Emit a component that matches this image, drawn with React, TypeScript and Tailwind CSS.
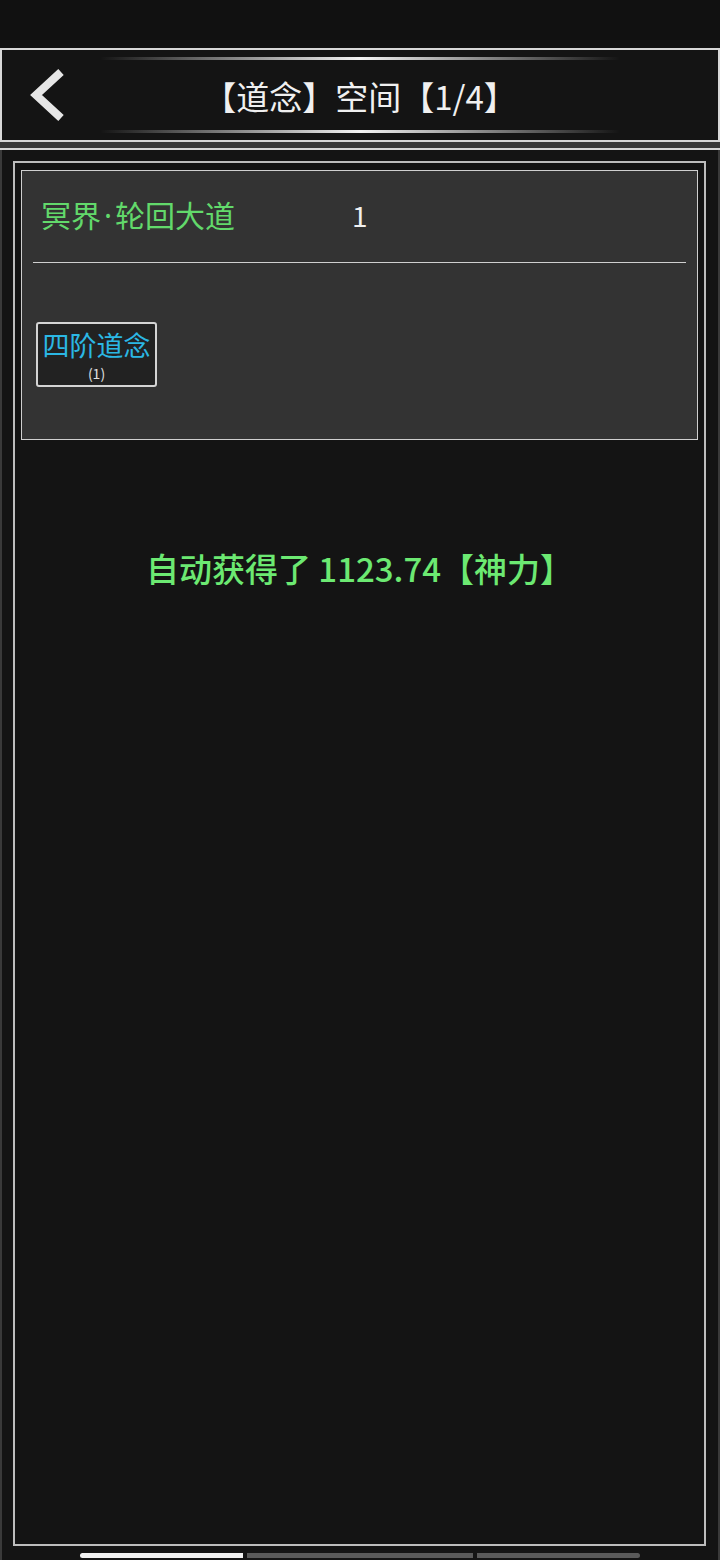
import React from 'react';

const FONT = { fontFamily: '"Noto Sans CJK SC", "Noto Sans", sans-serif' };
const LATIN = { fontFamily: '"Noto Sans", sans-serif' };

function GlowLine() {
  return (
    <div className="h-[3px] w-[520px] bg-gradient-to-r from-transparent via-[#f2f2f2] to-transparent" />
  );
}

function BackArrow() {
  return (
    <svg width="40" height="56" viewBox="0 0 40 56" fill="none">
      <polyline
        points="33,4 8,27 33,50"
        stroke="#e6e6e6"
        strokeWidth="8"
        strokeLinecap="butt"
        strokeLinejoin="miter"
      />
    </svg>
  );
}

export default function App() {
  return (
    <div className="w-[720px] h-[1560px] bg-[#111111] overflow-hidden flex flex-col" style={FONT}>
      {/* status bar space */}
      <div className="h-[48px] shrink-0" />

      {/* header */}
      <div className="shrink-0 flex border-2 border-[#d8d8d8] bg-[#141414]">
        <div className="w-[98px] flex items-center pl-[26px] pt-[2px]">
          <BackArrow />
        </div>
        <div className="w-[520px] flex flex-col items-center pt-[7px] pb-[7px]">
          <GlowLine />
          <div className="h-[70px] flex items-center pt-[2px] text-[33px] text-[#f0f0f0] leading-none">
            【道念】空间【1/4】
          </div>
          <GlowLine />
        </div>
        <div className="w-[98px]" />
      </div>
      <div className="h-[6px] shrink-0 bg-[#3a3a3a] border-b-2 border-[#d8d8d8] box-content" />

      {/* content */}
      <div className="flex-1 flex flex-col bg-[#141414] border-x-2 border-[#3a3a3a] pl-[11px] pr-[12px] pt-[11px] pb-[2px]">
        <div className="h-[1385px] border-2 border-[#bdbdbd] px-[6px] pt-[7px] flex flex-col">
          {/* card */}
          <div className="h-[270px] border border-[#cfcfcf] bg-[#333333] flex flex-col">
            <div className="h-[91px] flex items-center pl-[19px] pb-[4px]">
              <div className="w-[311px] text-[30px] text-[#62d96b] leading-none">
                冥界<span style={LATIN} className="px-[3px]">·</span>轮回大道
              </div>
              <div className="text-[28px] text-[#f0f0f0] leading-none">1</div>
            </div>
            <div className="h-px mx-[11px] bg-[#d0d0d0]" />
            <div className="mt-[59px] ml-[14px] w-[121px] h-[65px] rounded-[3px] border-2 border-[#d4d4d4] bg-[#222222] flex flex-col items-center pt-[2px]">
              <div className="text-[27px] leading-[38px] text-[#2bb7e4]">四阶道念</div>
              <div className="text-[14px] leading-[19px] text-[#e0e0e0]">(1)</div>
            </div>
          </div>

          {/* message */}
          <div className="mt-[104px] text-center text-[33px] leading-[48px] font-medium text-[#6ce972]">
            自动获得了 1123.74【神力】
          </div>
        </div>

        {/* page indicator */}
        <div className="mt-[7px] h-[5px] flex gap-[4px] pl-[67px]">
          <div className="w-[163px] h-full rounded-l-full bg-[#f2f2f2]" />
          <div className="w-[226px] h-full bg-[#5a5a5a]" />
          <div className="w-[163px] h-full rounded-r-full bg-[#5a5a5a]" />
        </div>
      </div>
    </div>
  );
}
